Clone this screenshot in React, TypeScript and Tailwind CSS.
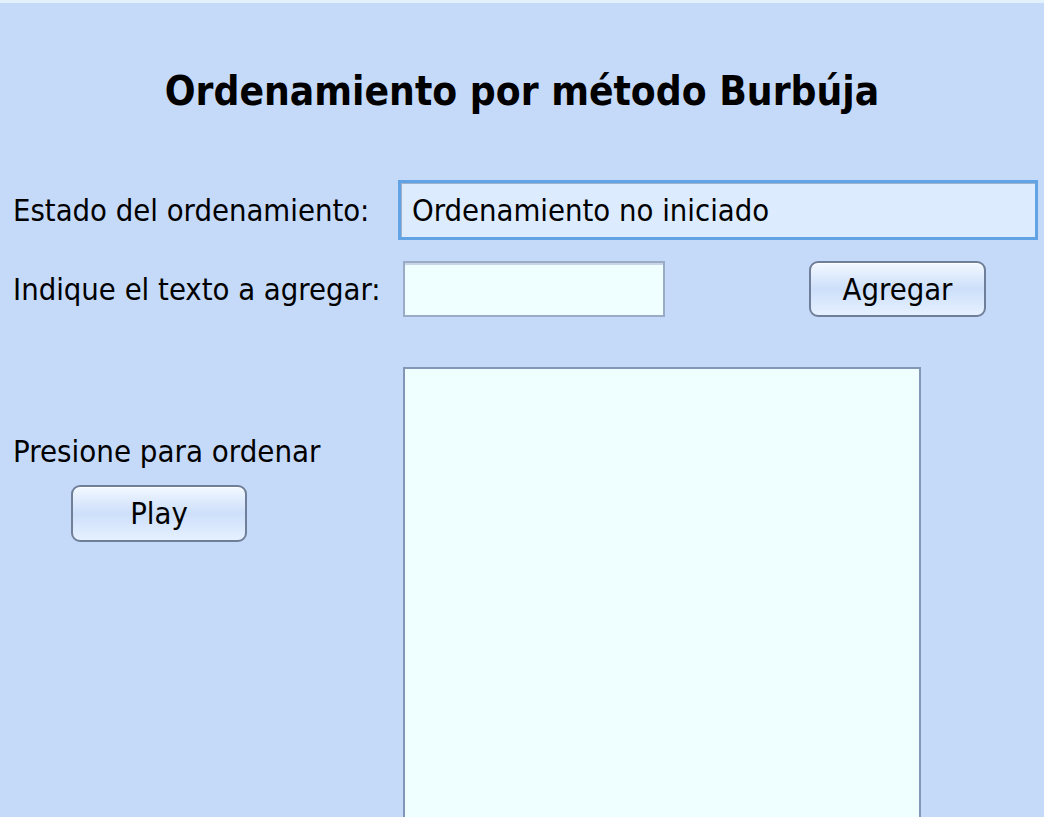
import React from "react";

const font = { fontFamily: '"DejaVu Sans Condensed", "DejaVu Sans", Tahoma, sans-serif' };

function Btn({ label, className }: { label: string; className: string }) {
  return (
    <button
      className={`rounded-[9px] border-2 border-[#6f7f99] bg-gradient-to-b from-[#f2f8ff] via-[#cddffa] to-[#e6f1ff] pt-[2px] text-[30.7px] leading-none text-black shadow-[inset_0_1px_0_#ffffff] ${className}`}
    >
      {label}
    </button>
  );
}

export default function App() {
  return (
    <div className="h-[817px] w-[1044px] overflow-hidden bg-[#c5d9f9] text-black" style={font}>
      <div className="h-[3px] bg-[#e3f1ff]" />
      <div className="flex h-[112px] justify-center pt-[69px]">
        <h1 className="text-[40.3px] font-bold leading-none">Ordenamiento por método Burbúja</h1>
      </div>
      <div className="mt-[65px] flex h-[60px] items-center">
        <span className="ml-[13px] mt-[3px] w-[385px] text-[30.7px] leading-none">Estado del ordenamiento:</span>
        <div className="flex h-[60px] w-[640px] items-center border-[3px] border-[#62a3e6] bg-[#dcecfe] pl-[11px] pt-[2px] text-[30.7px] leading-none shadow-[inset_1px_1px_0_#9fb2cc]">
          Ordenamiento no iniciado
        </div>
      </div>
      <div className="mt-[21px] flex h-[56px] items-center">
        <span className="ml-[13px] mt-[3px] w-[390px] text-[30.7px] leading-none">Indique el texto a agregar:</span>
        <div className="h-[56px] w-[262px] border-2 border-[#9aabc6] bg-[#efffff] shadow-[inset_0_2px_0_#c8d5e6]" />
        <Btn label="Agregar" className="ml-[144px] h-[56px] w-[177px]" />
      </div>
      <div className="mt-[50px] flex">
        <div className="flex w-[403px] flex-col">
          <span className="ml-[13px] mt-[66px] text-[30.9px] leading-[36px]">Presione para ordenar</span>
          <Btn label="Play" className="ml-[71px] mt-[16px] h-[57px] w-[176px]" />
        </div>
        <div className="h-[480px] w-[518px] border-2 border-[#8496b6] bg-[#efffff]" />
      </div>
    </div>
  );
}
